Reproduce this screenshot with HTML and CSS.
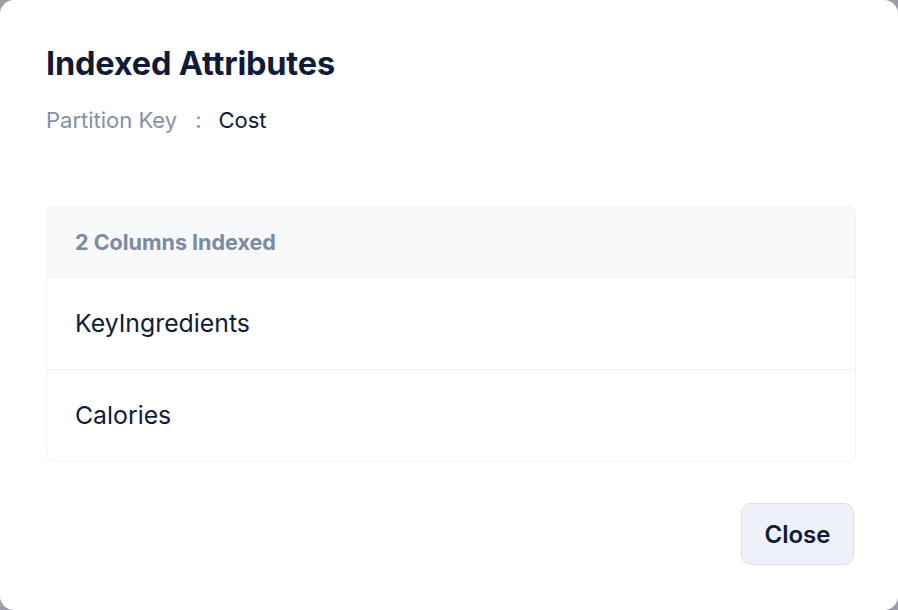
FILE: index.html
```html
<!DOCTYPE html>
<html>
<head>
<meta charset="utf-8">
<link rel="stylesheet" href="styles.css">
</head>
<body>
<div class="modal">
  <h1 class="title">Indexed Attributes</h1>
  <div class="pk">
    <span class="pk-label">Partition Key</span>
    <span class="pk-sep">:</span>
    <span class="pk-value">Cost</span>
  </div>
  <div class="table">
    <div class="table-head">2 Columns Indexed</div>
    <div class="row">KeyIngredients</div>
    <div class="row">Calories</div>
  </div>
  <div class="footer">
    <button class="btn">Close</button>
  </div>
</div>
</body>
</html>
```
FILE: styles.css
```css
html, body {
  margin: 0;
  padding: 0;
  background: #9c9ba8;
}
body {
  font-family: Inter, "Noto Sans", sans-serif;
}
.modal {
  width: 898px;
  height: 610px;
  box-sizing: border-box;
  background: #fff;
  border-radius: 14px;
  padding: 44px 42px 0 46px;
  display: flex;
  flex-direction: column;
}
.title {
  margin: 0;
  font-size: 32.5px;
  line-height: 40px;
  font-weight: 700;
  color: #101b3b;
  letter-spacing: -0.2px;
}
.pk {
  margin-top: 22px;
  display: flex;
  font-size: 22px;
  line-height: 28px;
}
.pk-label {
  color: #8191ab;
}
.pk-sep {
  color: #8191ab;
  margin-left: 18px;
  margin-right: 17px;
}
.pk-value {
  color: #101b3b;
}
.table {
  margin-top: 72px;
  border: 1px solid #f0f2f5;
  border-radius: 8px;
  overflow: hidden;
}
.table-head {
  background: #f7f9fb;
  height: 70px;
  display: flex;
  align-items: center;
  padding-left: 28px;
  font-size: 21.5px;
  font-weight: 700;
  color: #7b8aa5;
}
.row {
  height: 89px;
  padding-bottom: 2px;
  display: flex;
  align-items: center;
  padding-left: 28px;
  font-size: 24.8px;
  color: #101b3b;
  border-top: 1px solid #f0f2f5;
}
.footer {
  display: flex;
  justify-content: flex-end;
  margin-top: 41px;
}
.btn {
  width: 113px;
  height: 62px;
  border: 1px solid #d9ddea;
  background: #eff1f9;
  border-radius: 10px;
  font-family: Inter, "Noto Sans", sans-serif;
  font-size: 24px;
  font-weight: 600;
  color: #101b3b;
  margin-right: 2px;
}
```
